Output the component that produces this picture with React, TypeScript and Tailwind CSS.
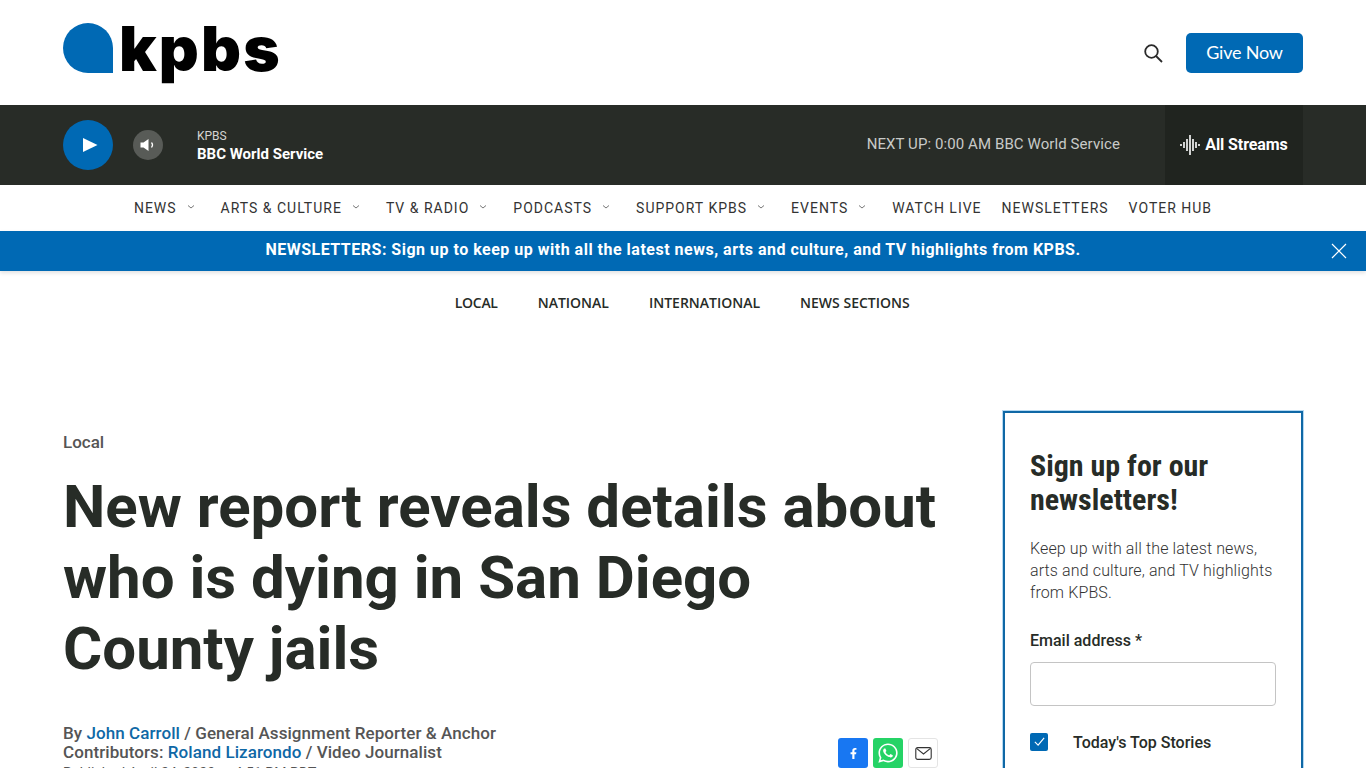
import { FaFacebookF, FaWhatsapp } from "react-icons/fa"

const navItems = [
  { label: "NEWS", caret: true },
  { label: "ARTS & CULTURE", caret: true },
  { label: "TV & RADIO", caret: true },
  { label: "PODCASTS", caret: true },
  { label: "SUPPORT KPBS", caret: true },
  { label: "EVENTS", caret: true },
  { label: "WATCH LIVE", caret: false },
  { label: "NEWSLETTERS", caret: false },
  { label: "VOTER HUB", caret: false },
]

const subNav = ["LOCAL", "NATIONAL", "INTERNATIONAL", "NEWS SECTIONS"]

function Caret() {
  return (
    <svg viewBox="0 0 10 6" className="ml-[9px] mr-[5px] mb-[3px] h-[6px] w-[10px]" fill="none" stroke="#777" strokeWidth="1">
      <path d="M2 1.5 5 4l3-2.5" />
    </svg>
  )
}

function Wave() {
  const bars = [
    [1, 9, 11],
    [4, 7, 13],
    [7, 4, 16],
    [10, 0, 20],
    [13, 4, 16],
    [16, 7, 13],
    [19, 9, 11],
  ]
  return (
    <svg viewBox="0 0 20 20" className="h-5 w-5" stroke="#fff" strokeWidth="1.6">
      {bars.map(([x, a, b]) => (
        <line key={x} x1={x} x2={x} y1={a} y2={b} />
      ))}
    </svg>
  )
}

export default function App() {
  return (
    <div className="h-screen overflow-hidden bg-white font-['Roboto',sans-serif] text-[#272c27]">
      <header className="flex h-[105px] items-center justify-between px-[63px]">
        <div className="flex items-center">
          {/* drop logo */}
          <div className="mb-[9px] h-[50px] w-[50px] rounded-[25px] rounded-br-none bg-[#0069b4]" />
          <span className="mb-[7px] ml-[6px] font-['Inter',sans-serif] text-[62px] leading-none font-black tracking-[2.2px] text-black">
            kpbs
          </span>
        </div>
        <div className="flex items-center">
          <svg viewBox="0 0 20 20" className="mr-[23px] h-5 w-5" fill="none" stroke="#2a2a2a" strokeWidth="1.8">
            <circle cx="8.5" cy="8.5" r="6.3" />
            <path d="m13 13 6 6" />
          </svg>
          <button className="flex h-10 w-[117px] items-center justify-center rounded-[5px] bg-[#0069b4] font-['Lato',sans-serif] text-[18px] tracking-[-0.2px] text-white">
            Give Now
          </button>
        </div>
      </header>

      <div className="flex h-20 items-center bg-[#282c27] px-[63px]">
        <div className="flex h-[50px] w-[50px] items-center justify-center rounded-full bg-[#0069b4]">
          <svg viewBox="0 0 16 16" className="ml-[3px] h-4 w-4" fill="#fff">
            <path d="M1 1 15.500 8 1 15z" />
          </svg>
        </div>
        <div className="ml-5 flex h-[30px] w-[30px] items-center justify-center rounded-full bg-[#585b57]">
          <svg viewBox="0 0 16 14" className="h-[14px] w-[17px]" fill="#fff">
            <path d="M0 4.500h3L8 1v12L3 9.500H0z" />
            <path d="M11 4.500c1.300 1.500 1.300 3.500 0 5" fill="none" stroke="#fff" strokeWidth="1.200" />
          </svg>
        </div>
        <div className="ml-[34px] flex flex-col pt-[2px]">
          <span className="text-[12px] leading-[14px] text-[#d4d4d2]">KPBS</span>
          <span className="mt-[2px] text-[15px] leading-[18px] font-bold text-white">BBC World Service</span>
        </div>
        <span className="ml-auto mb-[2px] text-[15px] tracking-[0.09px] text-[#c9cac8]">NEXT UP: 0:00 AM BBC World Service</span>
        <div className="ml-[45px] flex h-full w-[138px] items-center justify-center gap-[5px] bg-[#20241f]">
          <Wave />
          <span className="text-[16px] font-bold tracking-[-0.1px] text-white">All Streams</span>
        </div>
      </div>

      <nav className="flex h-[46px] items-center justify-center gap-5 pr-5 text-[14px] tracking-[1px] text-[#333]">
        {navItems.map((item) => (
          <span key={item.label} className="flex items-center whitespace-nowrap">
            {item.label}
            {item.caret && <Caret />}
          </span>
        ))}
      </nav>

      <div className="relative flex h-10 items-center justify-center bg-[#0069b4] pb-[2px] pr-5 text-[16px] font-bold tracking-[0.5px] text-white shadow-[0_2px_4px_rgba(0,0,0,0.12)]">
        NEWSLETTERS: Sign up to keep up with all the latest news, arts and culture, and TV highlights from KPBS.
        <svg viewBox="0 0 16 16" className="absolute right-[19px] top-3 h-4 w-4" stroke="#fff" strokeWidth="1.200">
          <path d="m1 1 14 14M15 1 1 15" />
        </svg>
      </div>

      <div className="flex h-16 items-center justify-center gap-10 pb-[2px] pr-[1.5px] font-['Open_Sans',sans-serif] text-[14px] font-[650] text-[#272c27]">
        {subNav.map((label) => (
          <span key={label} className={label === "LOCAL" ? "tracking-[-0.3px]" : ""}>
            {label}
          </span>
        ))}
      </div>

      <main className="flex justify-between px-[63px] pt-[76px]">
        <div className="w-[875px]">
          <div className="mt-[22px] text-[17px] leading-[19px] font-medium text-[#555]">Local</div>
          <h1 className="mt-[19px] text-[60px] leading-[71px] font-bold">
            New report reveals details about who is dying in San Diego County jails
          </h1>
          <div className="mt-[40px] flex items-start justify-between">
            <div className="text-[17px] leading-[19px] font-medium tracking-[0.07px] text-[#555]">
              <div>
                By <span className="text-[#0f68a6]">John Carroll</span> / General Assignment Reporter &amp; Anchor
              </div>
              <div>
                Contributors: <span className="text-[#0f68a6]">Roland Lizarondo</span> / Video Journalist
              </div>
              <div className="mt-[2px] text-[14px] font-normal">Published April 24, 2023 at 4:51 PM PDT</div>
            </div>
            <div className="mt-[14px] flex gap-[5px]">
              <div className="flex h-[30px] w-[30px] items-center justify-center rounded-[3px] bg-[#1877f2] text-white">
                <FaFacebookF className="h-[11px] w-[11px]" />
              </div>
              <div className="flex h-[30px] w-[30px] items-center justify-center rounded-[3px] bg-[#25d366] text-white">
                <FaWhatsapp className="h-[22px] w-[22px]" />
              </div>
              <div className="flex h-[30px] w-[30px] items-center justify-center rounded-[3px] border border-[#e4e4e4] bg-white">
                <svg viewBox="0 0 18 14" className="h-[13px] w-[17px]" fill="none" stroke="#333" strokeWidth="1.200">
                  <rect x="0.700" y="0.700" width="16.600" height="12.600" rx="2" />
                  <path d="m1.500 1.500 7.500 6 7.500-6" />
                </svg>
              </div>
            </div>
          </div>
        </div>

        <aside className="h-[500px] w-[300px] border-2 border-[#0f68a6] px-[25px] pt-[36px] outline-1 outline-[#b5d9f2]">
          <h2 className="text-[30px] leading-[33.5px] font-bold [font-stretch:75%]">Sign up for our newsletters!</h2>
          <p className="mt-[22px] text-[16px] leading-[22px] font-light tracking-[0.12px] text-[#333]">
            Keep up with all the latest news, arts and culture, and TV highlights from KPBS.
          </p>
          <label className="mt-[27px] block text-[16px] leading-[19px] font-medium">Email address *</label>
          <div className="mt-[12px] h-11 w-[246px] rounded-[4px] border border-[#c4c4c4]" />
          <div className="mt-[25px] flex items-center">
            <div className="mt-[-3px] flex h-[18px] w-[18px] items-center justify-center rounded-[2px] bg-[#0069b4]">
              <svg viewBox="0 0 14 14" className="h-[13px] w-[13px]" fill="none" stroke="#fff" strokeWidth="1.200">
                <path d="m2 7.500 3.500 3.500L12 3" />
              </svg>
            </div>
            <span className="ml-[25px] text-[16px] font-medium">Today's Top Stories</span>
          </div>
        </aside>
      </main>
    </div>
  )
}
